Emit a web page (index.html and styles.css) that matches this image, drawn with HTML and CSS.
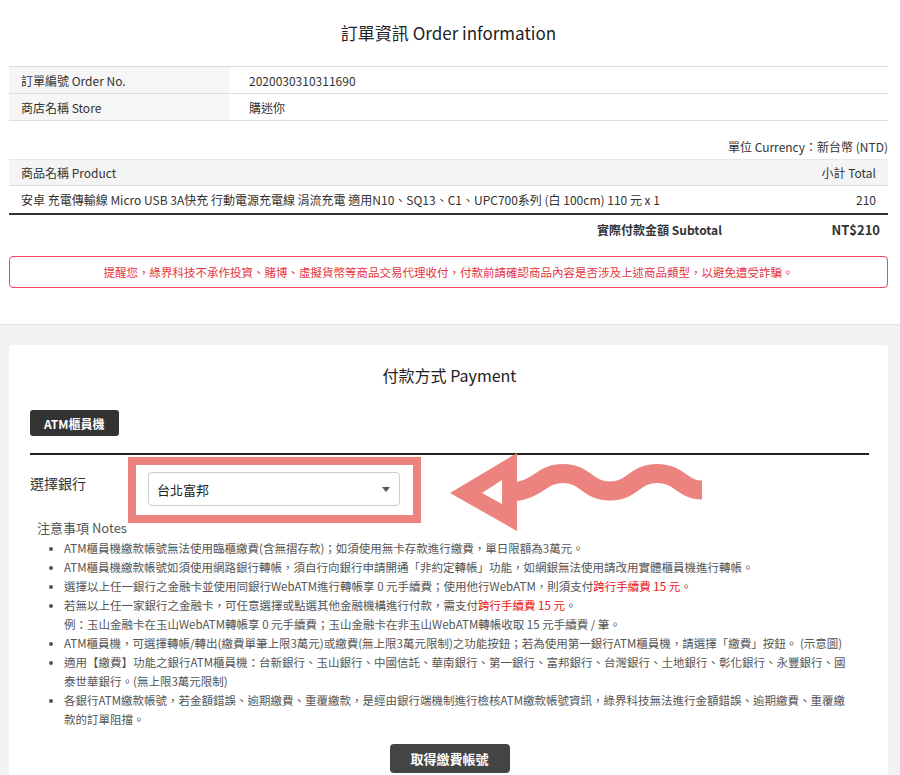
FILE: index.html
```html
<!DOCTYPE html>
<html lang="zh-Hant">
<head>
    <meta charset="UTF-8">
    <meta name="viewport" content="width=device-width, initial-scale=1.0">
    <title>訂單資訊 Order information</title>
    <link rel="stylesheet" href="styles.css">
</head>
<body>
    <div class="order-section">
        <div class="container">
            <h1>訂單資訊 Order information</h1>

            <table class="info-table">
                <tr><th>訂單編號 Order No.</th><td>2020030310311690</td></tr>
                <tr><th>商店名稱 Store</th><td>購迷你</td></tr>
            </table>

            <div class="currency">單位 Currency：新台幣 (NTD)</div>

            <table class="product-table">
                <tr class="head">
                    <th>商品名稱 Product</th>
                    <th class="num">小計 Total</th>
                </tr>
                <tr>
                    <td>安卓 充電傳輸線 Micro USB 3A快充 行動電源充電線 涓流充電 適用N10、SQ13、C1、UPC700系列 (白 100cm) 110 元 x 1</td>
                    <td class="num">210</td>
                </tr>
            </table>

            <div class="subtotal">
                <span class="label">實際付款金額 Subtotal</span>
                <span class="amount">NT$210</span>
            </div>

            <div class="warning">提醒您，綠界科技不承作投資、賭博、虛擬貨幣等商品交易代理收付，付款前請確認商品內容是否涉及上述商品類型，以避免遭受詐騙。</div>
        </div>
    </div>

    <div class="payment-section">
        <div class="card">
            <h2>付款方式 Payment</h2>
            <button class="tab">ATM櫃員機</button>

            <div class="bank-row">
                <label>選擇銀行</label>
                <div class="select"><span>台北富邦</span><i class="caret"></i></div>

                <!-- 標示框與箭頭 -->
                <div class="highlight"></div>
                <svg class="arrow" width="252" height="80" viewBox="0 0 252 80">
                    <path d="M0 40 L67 0 L67 78 Z M32 40 L52 51 L52 27 Z" fill="#ec837f" fill-rule="evenodd"/>
                    <path d="M58 39 C88 39 90 20.5 113 20.5 C136 20.5 137 38 160 38 C183 38 184 20.5 207 20.5 C230 20.5 232 37 252 37" fill="none" stroke="#ec837f" stroke-width="19"/>
                </svg>
            </div>

            <div class="notes">
                <div class="notes-title">注意事項 Notes</div>
                <ul>
                    <li>ATM櫃員機繳款帳號無法使用臨櫃繳費(含無摺存款)；如須使用無卡存款進行繳費，單日限額為3萬元。</li>
                    <li>ATM櫃員機繳款帳號如須使用網路銀行轉帳，須自行向銀行申請開通「非約定轉帳」功能，如網銀無法使用請改用實體櫃員機進行轉帳。</li>
                    <li>選擇以上任一銀行之金融卡並使用同銀行WebATM進行轉帳享 0 元手續費；使用他行WebATM，則須支付<span class="red">跨行手續費 15 元</span>。</li>
                    <li>若無以上任一家銀行之金融卡，可任意選擇或點選其他金融機構進行付款，需支付<span class="red">跨行手續費 15 元</span>。<br>例：玉山金融卡在玉山WebATM轉帳享 0 元手續費；玉山金融卡在非玉山WebATM轉帳收取 15 元手續費 / 筆。</li>
                    <li>ATM櫃員機，可選擇轉帳/轉出(繳費單筆上限3萬元)或繳費(無上限3萬元限制)之功能按鈕；若為使用第一銀行ATM櫃員機，請選擇「繳費」按鈕。 (示意圖)</li>
                    <li>適用【繳費】功能之銀行ATM櫃員機：台新銀行、玉山銀行、中國信託、華南銀行、第一銀行、富邦銀行、台灣銀行、土地銀行、彰化銀行、永豐銀行、國泰世華銀行。(無上限3萬元限制)</li>
                    <li>各銀行ATM繳款帳號，若金額錯誤、逾期繳費、重覆繳款，是經由銀行端機制進行檢核ATM繳款帳號資訊，綠界科技無法進行金額錯誤、逾期繳費、重覆繳款的訂單阻擋。</li>
                </ul>
            </div>

            <div class="actions">
                <button class="submit">取得繳費帳號</button>
            </div>
        </div>
    </div>
</body>
</html>
```

FILE: styles.css
```css
body {
    margin: 0;
    font-family: "Noto Sans CJK TC", "Noto Sans", sans-serif;
    color: #333;
    background-color: #f2f2f2;
}
.order-section {
    background-color: #fff;
    padding: 21px 0 36px;
    border-bottom: 1px solid #e4e4e4;
}
.container {
    margin: 0 12px 0 9px;
}
h1 {
    margin: 0 0 21px;
    font-size: 17px;
    line-height: 24px;
    font-weight: normal;
    text-align: center;
    color: #222;
}
table {
    width: 100%;
    border-collapse: collapse;
    font-size: 12px;
}
.info-table th,
.info-table td {
    height: 26px;
    padding: 0;
    border-top: 1px solid #ddd;
    border-bottom: 1px solid #ddd;
    text-align: left;
    font-weight: normal;
}
.info-table th {
    width: 208px;
    padding-left: 12px;
    background-color: #f6f6f6;
}
.info-table td {
    padding-left: 20px;
}
.currency {
    margin-top: 17px;
    font-size: 12px;
    line-height: 18px;
    text-align: right;
}
.product-table {
    margin-top: 3px;
}
.product-table th,
.product-table td {
    padding: 0 12px;
    text-align: left;
    font-weight: normal;
}
.product-table .head th {
    height: 25px;
    background-color: #f4f4f4;
    border-top: 1px solid #e8e8e8;
}
.product-table td {
    height: 27px;
    border-top: 1px solid #ddd;
    border-bottom: 2px solid #333;
}
.product-table .num {
    text-align: right;
    white-space: nowrap;
}
.subtotal {
    display: flex;
    justify-content: flex-end;
    height: 30px;
    line-height: 30px;
    font-weight: bold;
}
.subtotal .label {
    font-size: 12px;
    margin-right: 8px;
}
.subtotal .amount {
    width: 150px;
    padding-right: 8px;
    text-align: right;
    font-size: 13px;
}
.warning {
    margin-top: 11px;
    height: 30px;
    line-height: 30px;
    border: 1px solid #f0445a;
    border-radius: 4px;
    text-align: center;
    font-size: 11.5px;
    color: #e4343f;
}
.payment-section {
    padding-top: 20px;
}
.card {
    margin: 0 12px 0 9px;
    padding: 19px 19px 20px 21px;
    background-color: #fff;
    border-radius: 4px;
}
h2 {
    margin: 0;
    font-size: 16px;
    line-height: 22px;
    font-weight: normal;
    text-align: center;
    color: #222;
}
.tab {
    display: block;
    margin-top: 24px;
    height: 26px;
    padding: 0 14px;
    border: none;
    border-radius: 3px;
    background-color: #333;
    color: #fff;
    font-family: inherit;
    font-size: 12px;
    font-weight: bold;
}
.bank-row {
    position: relative;
    display: flex;
    margin-top: 17px;
    padding-top: 17px;
    border-top: 2px solid #222;
}
.bank-row label {
    width: 118px;
    padding-top: 1px;
    font-size: 14px;
    line-height: 20px;
}
.select {
    display: flex;
    align-items: center;
    justify-content: space-between;
    box-sizing: border-box;
    width: 252px;
    height: 34px;
    padding: 0 9px 0 8px;
    border: 1px solid #ccc;
    border-radius: 4px;
    font-size: 13px;
    color: #222;
}
.caret {
    width: 0;
    height: 0;
    border-left: 4px solid transparent;
    border-right: 4px solid transparent;
    border-top: 5px solid #555;
}
.highlight {
    position: absolute;
    left: 98px;
    top: 2px;
    width: 293px;
    height: 66px;
    box-sizing: border-box;
    border: 8px solid #ec837f;
}
.arrow {
    position: absolute;
    left: 420px;
    top: -2px;
}
.notes {
    margin-top: 13px;
    color: #555;
}
.notes-title {
    padding-left: 7px;
    font-size: 13px;
    line-height: 18px;
}
.notes ul {
    margin: 2px 0 0;
    padding: 0 20px 0 34px;
    font-size: 11.5px;
    line-height: 19px;
}
.red {
    color: #ee1111;
}
.actions {
    margin-top: 15px;
    text-align: center;
}
.submit {
    width: 120px;
    height: 29px;
    border: none;
    border-radius: 4px;
    background-color: #444;
    color: #fff;
    font-family: inherit;
    font-size: 13px;
    font-weight: bold;
}
```
